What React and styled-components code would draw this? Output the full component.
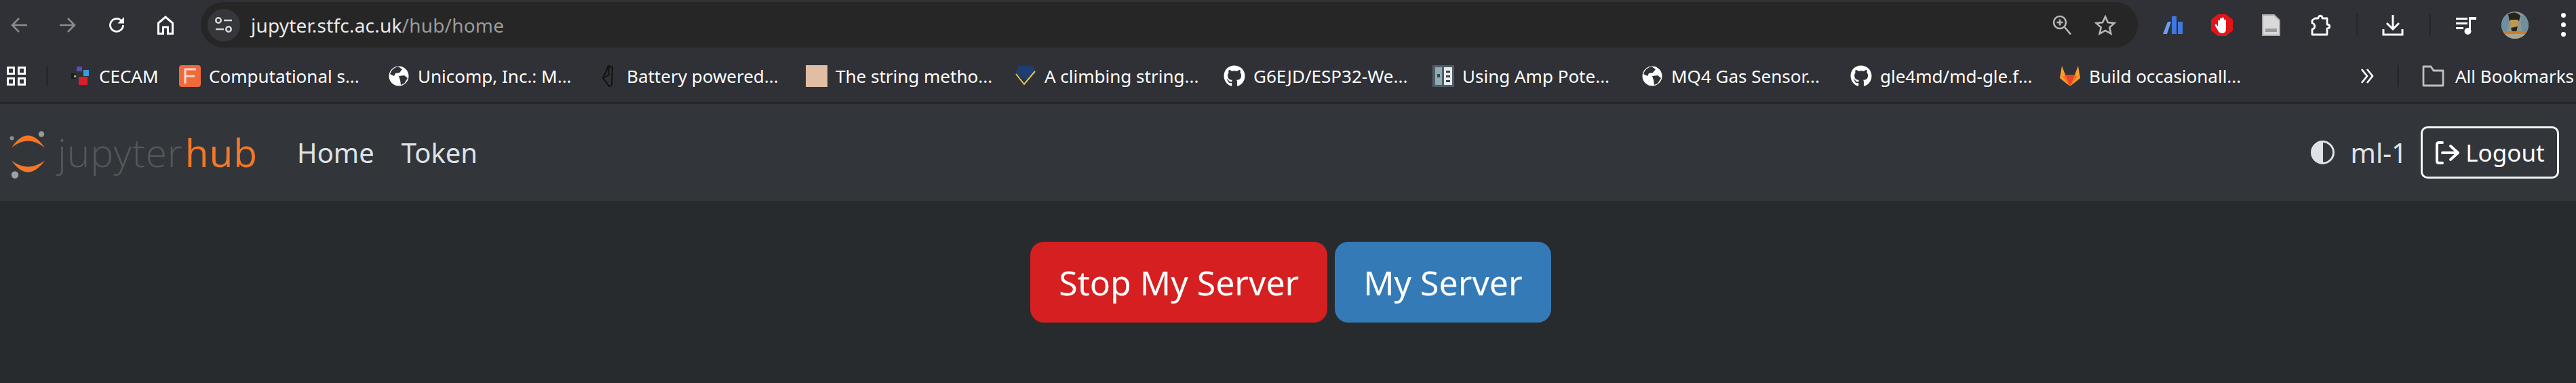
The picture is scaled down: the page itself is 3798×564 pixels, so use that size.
import styled, { createGlobalStyle } from 'styled-components';
import { FaGithub } from 'react-icons/fa';

const GlobalStyle = createGlobalStyle`
  html, body {
    margin: 0;
    height: 100%;
    background: #272b2e;
    font-family: 'Noto Sans', sans-serif;
  }
  #root {
    height: 100%;
  }
`;

export default function App() {
  const bookmarks = [
    { icon: <CecamIcon />, label: 'CECAM', width: 162 },
    { icon: <FigIcon />, label: 'Computational s...' },
    { icon: <GlobeIcon />, label: 'Unicomp, Inc.: M...' },
    { icon: <BatteryIcon />, label: 'Battery powered...' },
    { icon: <Swatch />, label: 'The string metho...' },
    { icon: <DiamondIcon />, label: 'A climbing string...' },
    { icon: <GithubIcon />, label: 'G6EJD/ESP32-We...' },
    { icon: <AmpIcon />, label: 'Using Amp Pote...' },
    { icon: <GlobeIcon />, label: 'MQ4 Gas Sensor...' },
    { icon: <GithubIcon />, label: 'gle4md/md-gle.f...' },
    { icon: <GitlabIcon />, label: 'Build occasionall...' },
  ];

  return (
    <Page>
      <GlobalStyle />
      <Chrome>
        <Toolbar>
          <NavIcon>
            <svg width="24" height="24" viewBox="0 0 24 24" fill="none" stroke="#8a8b8d" strokeWidth="2.6">
              <path d="M24 12H2M12 2 2 12l10 10" />
            </svg>
          </NavIcon>
          <NavIcon>
            <svg width="24" height="24" viewBox="0 0 24 24" fill="none" stroke="#8a8b8d" strokeWidth="2.6">
              <path d="M0 12h22M12 2l10 10-10 10" />
            </svg>
          </NavIcon>
          <NavIcon>
            <svg width="24" height="24" viewBox="0 0 24 24" fill="none" stroke="#fff" strokeWidth="2.8">
              <path d="M21.5 12a9.5 9.5 0 1 1-3-7L22 8" />
              <path d="M23 0v9.5h-9.5" fill="#fff" stroke="none" />
            </svg>
          </NavIcon>
          <NavIcon>
            <svg width="24" height="28" viewBox="0 0 24 28" fill="none" stroke="#fff" strokeWidth="3">
              <path d="M1.5 26.5V11L12 2l10.5 9v15.500h-7V17h-7v9.500z" />
            </svg>
          </NavIcon>
          <Omnibox>
            <TuneBadge>
              <svg width="26" height="24" viewBox="0 0 26 24" fill="none" stroke="#d4d5d6" strokeWidth="2.600">
                <circle cx="5" cy="5" r="3.700" />
                <path d="M13 5h12M1 18h12" />
                <circle cx="20" cy="18" r="3.700" />
              </svg>
            </TuneBadge>
            <Url>
              jupyter.stfc.ac.uk<UrlPath>/hub/home</UrlPath>
            </Url>
            <OmniActions>
              <svg width="28" height="29" viewBox="0 0 28 29" fill="none" stroke="#b5b6b7" strokeWidth="2.600">
                <circle cx="11" cy="11" r="9" />
                <path d="M18 18l9 10.500M6.500 11h9M11 6.500v9" />
              </svg>
              <svg width="32" height="30" viewBox="0 0 32 30" fill="none" stroke="#b5b6b7" strokeWidth="2.600">
                <path d="M16 2.500l3.900 8.600 9.400 1-7 6.300 2 9.200-8.300-4.700-8.300 4.700 2-9.200-7-6.300 9.400-1z" />
              </svg>
            </OmniActions>
          </Omnibox>
          <ExtensionTray>
            <svg width="30" height="28" viewBox="0 0 30 28">
              <path d="M7 9h5L6 27H0z" fill="#6f9ef0" />
              <rect x="13" y="1" width="7" height="26" fill="#3f78e0" />
              <rect x="22" y="9" width="7" height="18" fill="#3f78e0" />
            </svg>
            <svg width="32" height="32" viewBox="0 0 32 32">
              <path d="M10 0h12l10 8v16l-10 8H10L0 24V8z" fill="#e2141a" />
              <path d="M10 18V10a1.500 1.500 0 0 1 3 0v4-7a1.500 1.500 0 0 1 3 0v7V6a1.500 1.500 0 0 1 3 0v8-5a1.500 1.500 0 0 1 3 0v13c0 4-3 6-6 6s-5-2-7-6l-3-5c-1-2 1-3 2.500-1.500z" fill="#fff" />
            </svg>
            <FileSlot>
              <svg width="27" height="32" viewBox="0 0 27 32">
                <path d="M1 1h17l8 8v22H1z" fill="#d9d9d9" stroke="#a9a9a9" strokeWidth="2" />
                <rect x="5" y="21" width="17" height="5" fill="#9a9a9a" />
              </svg>
            </FileSlot>
            <PuzzleSlot>
              <svg width="31" height="32" viewBox="0 0 31 32" fill="none" stroke="#fff" strokeWidth="2.800">
                <path d="M7 6h5c0-5 6-5 6 0h7v9c5 0 5 6 0 6v9H3v-8c5-1 5-8 0-9V9z" strokeLinejoin="round" />
              </svg>
            </PuzzleSlot>
            <Divider />
            <DownloadSlot>
              <svg width="32" height="32" viewBox="0 0 32 32" fill="none" stroke="#fff" strokeWidth="3">
                <path d="M16 1v21M7 13l9 9 9-9M2 22v8h28v-8" />
              </svg>
            </DownloadSlot>
            <Divider />
            <MusicSlot>
              <svg width="30" height="28" viewBox="0 0 30 28" fill="#fff">
                <rect x="0" y="3" width="17" height="3" />
                <rect x="0" y="10" width="17" height="3" />
                <rect x="0" y="17" width="11" height="3" />
                <rect x="19" y="3" width="3" height="20" />
                <rect x="19" y="2" width="11" height="4" />
                <circle cx="17.500" cy="23" r="5" />
              </svg>
            </MusicSlot>
            <Avatar>
              <svg width="40" height="40" viewBox="0 0 40 40">
                <defs>
                  <clipPath id="avatarClip">
                    <circle cx="20" cy="20" r="20" />
                  </clipPath>
                </defs>
                <g clipPath="url(#avatarClip)">
                  <rect width="40" height="40" fill="#8c9a8c" />
                  <path d="M0 4h14L8 30H0zM28 6h12v24H30z" fill="#6f8f9f" />
                  <path d="M10 4q10-6 18 2l-2 8-14 0z" fill="#26231f" />
                  <path d="M13 12h12l-2 14-4 2-5-4z" fill="#c0974e" />
                  <path d="M14 24l10-2-2 8h-6z" fill="#26231f" />
                  <rect y="29" width="40" height="4" fill="#d07b2e" />
                  <rect y="33" width="40" height="7" fill="#a9a68c" />
                </g>
              </svg>
            </Avatar>
            <Kebab>
              <i />
              <i />
              <i />
            </Kebab>
          </ExtensionTray>
        </Toolbar>
        <BookmarkBar>
          <AppsGrid>
            <i />
            <i />
            <i />
            <i />
          </AppsGrid>
          <BarDivider />
          <BookmarkList>
            {bookmarks.map((b) => (
              <Bookmark key={b.label} $w={b.width}>
                <FavSlot>{b.icon}</FavSlot>
                {b.label}
              </Bookmark>
            ))}
          </BookmarkList>
          <BarEnd>
            <svg width="20" height="24" viewBox="0 0 20 24" fill="none" stroke="#fff" strokeWidth="2.600">
              <path d="M2 2l8 10-8 10M10 2l8 10-8 10" />
            </svg>
            <BarDivider />
            <FolderLink>
              <svg width="33" height="32" viewBox="0 0 33 32" fill="none" stroke="#bdbebf" strokeWidth="2.800">
                <path d="M2 2h11l4 6h14v22H2z" strokeLinejoin="round" />
              </svg>
              All Bookmarks
            </FolderLink>
          </BarEnd>
        </BookmarkBar>
      </Chrome>
      <HubNav>
        <Brand>
          <svg width="60" height="76" viewBox="0 0 60 76">
            <path d="M7 30.500Q31-5.500 56 30.500 31 10.500 7 30.500z" fill="#f37726" />
            <path d="M7 49.500Q31 83.500 56 49.500 31 67.500 7 49.500z" fill="#f37726" />
            <circle cx="7.500" cy="16.500" r="3" fill="#8e8e8e" />
            <circle cx="51" cy="10.500" r="4.200" fill="#9a9a9a" />
            <circle cx="12" cy="70.500" r="5.200" fill="#a0a0a0" />
          </svg>
          <BrandText>
            jupyter<BrandHub>hub</BrandHub>
          </BrandText>
        </Brand>
        <NavLinks>
          <NavLink>Home</NavLink>
          <NavLink>Token</NavLink>
        </NavLinks>
        <UserArea>
          <ThemeDot />
          <UserName>ml-1</UserName>
          <LogoutButton>
            <svg width="37" height="36" viewBox="0 0 37 36" fill="none" stroke="#fff" strokeWidth="4" strokeLinecap="round" strokeLinejoin="round">
              <path d="M11 3H6Q3 3 3 6v24q0 3 3 3h5" />
              <path d="M11 18h21M23 8l11 10-11 10" />
            </svg>
            Logout
          </LogoutButton>
        </UserArea>
      </HubNav>
      <Main>
        <ServerButton $bg="#d51f21">Stop My Server</ServerButton>
        <ServerButton $bg="#337ab7">My Server</ServerButton>
      </Main>
    </Page>
  );
}

function CecamIcon() {
  return (
    <svg width="28" height="28" viewBox="0 0 28 28">
      <rect x="9" y="0" width="8" height="7" fill="#5a4fb0" />
      <rect x="19" y="5" width="8" height="9" fill="#3a9ae0" />
      <rect x="12" y="15" width="13" height="12" fill="#d81f2a" />
      <rect x="1" y="10" width="7" height="8" fill="#1c1c1c" />
      <rect x="5" y="13" width="3" height="3" fill="#aaa" />
    </svg>
  );
}

function FigIcon() {
  return (
    <svg width="32" height="32" viewBox="0 0 32 32">
      <rect width="32" height="32" rx="4" fill="#f0693a" />
      <path d="M9 27V6h16M9 16h14" fill="none" stroke="#fbd9cb" strokeWidth="3" />
    </svg>
  );
}

function GlobeIcon() {
  return (
    <svg width="30" height="30" viewBox="0 0 30 30">
      <circle cx="15" cy="15" r="14.500" fill="#fff" />
      <path d="M14 1l6 4-4 5-6 1-2 4-6-3Q5 3 14 1zM15 15l8-1 5 4-5 8-5 2-1-7z" fill="#2f3136" />
    </svg>
  );
}

function BatteryIcon() {
  return (
    <svg width="20" height="32" viewBox="0 0 20 32" fill="none" stroke="#111" strokeWidth="2">
      <path d="M11 1l6 2-1 26-4 2-9-12z" />
      <path d="M5 18l9-5M12 3l-1 10" />
    </svg>
  );
}

function DiamondIcon() {
  return (
    <svg width="32" height="32" viewBox="0 0 32 32">
      <path d="M6 1h20l5 8-13 14L1 12z" fill="#1f3d70" />
      <path d="M2 13l12 15L30 9" fill="none" stroke="#e3c84f" strokeWidth="2" />
    </svg>
  );
}

function GithubIcon() {
  return <FaGithub size={32} color="#fff" />;
}

function AmpIcon() {
  return (
    <svg width="32" height="32" viewBox="0 0 32 32">
      <rect width="32" height="32" fill="#4f5d66" />
      <rect x="4" y="3" width="10" height="26" fill="#8fa9b5" />
      <rect x="17" y="3" width="12" height="26" fill="#e8ecee" />
      <rect x="7" y="13" width="4" height="5" fill="#39444b" />
      <rect x="20" y="8" width="6" height="3" fill="#39444b" />
      <rect x="20" y="15" width="6" height="3" fill="#39444b" />
      <rect x="20" y="22" width="6" height="3" fill="#39444b" />
    </svg>
  );
}

function GitlabIcon() {
  return (
    <svg width="32" height="32" viewBox="0 0 32 32">
      <path d="M16 31L1 19l3-18 5 13z" fill="#fc9f26" />
      <path d="M16 31l15-12-3-18-5 13z" fill="#fc9f26" />
      <path d="M16 31L5 17l4-3h14l4 3z" fill="#fc6d26" />
      <path d="M16 31L9 14h14z" fill="#e24329" />
    </svg>
  );
}

const Page = styled.div`
  height: 564px;
  display: flex;
  flex-direction: column;
  overflow: hidden;
`;
const Chrome = styled.header`
  background: #2f3136;
  border-bottom: 3px solid #25272a;
`;
const Toolbar = styled.div`
  height: 74px;
  display: flex;
  align-items: flex-start;
  padding: 3px 0 0 16px;
  box-sizing: border-box;
`;
const NavIcon = styled.span`
  flex: none;
  width: 24px;
  height: 67px;
  margin-right: 48px;
  display: flex;
  align-items: center;
  justify-content: center;
  &:nth-child(4) {
    margin-right: 40px;
  }
`;
const Omnibox = styled.div`
  flex: 1;
  height: 67px;
  background: #262626;
  border-radius: 34px;
  display: flex;
  align-items: center;
  padding: 0 32px 0 10px;
  box-sizing: border-box;
`;
const TuneBadge = styled.span`
  width: 48px;
  height: 48px;
  border-radius: 50%;
  background: #36373a;
  display: flex;
  align-items: center;
  justify-content: center;
  margin-right: 16px;
`;
const Url = styled.span`
  color: #e8e9ea;
  font-size: 28px;
  letter-spacing: 0.2px;
`;
const UrlPath = styled.span`
  color: #9a9b9d;
`;
const OmniActions = styled.span`
  margin-left: auto;
  display: flex;
  align-items: center;
  gap: 34px;
`;
const ExtensionTray = styled.div`
  width: 646px;
  height: 67px;
  flex: none;
  display: flex;
  align-items: center;
  padding-left: 37px;
  box-sizing: border-box;
  gap: 41px;
`;
const FileSlot = styled.span`
  display: flex;
  margin-left: 2px;
`;
const PuzzleSlot = styled.span`
  display: flex;
  margin-left: 3px;
`;
const Divider = styled.span`
  width: 3px;
  height: 32px;
  background: #26282b;
  margin: 0 -4px;
`;
const DownloadSlot = styled.span`
  display: flex;
  margin-left: -2px;
`;
const MusicSlot = styled.span`
  display: flex;
`;
const Avatar = styled.span`
  display: flex;
  margin-left: -4px;
`;
const Kebab = styled.span`
  display: flex;
  flex-direction: column;
  gap: 7px;
  margin-left: 7px;
  i {
    width: 7px;
    height: 7px;
    border-radius: 50%;
    background: #fff;
  }
`;
const BookmarkBar = styled.nav`
  height: 76px;
  display: flex;
  align-items: center;
  padding-left: 10px;
`;
const AppsGrid = styled.span`
  display: grid;
  grid-template-columns: 12px 12px;
  gap: 4px;
  margin-right: 30px;
  i {
    width: 6px;
    height: 6px;
    border: 3px solid #fff;
  }
`;
const BarDivider = styled.span`
  width: 3px;
  height: 32px;
  background: #26282b;
  flex: none;
`;
const BookmarkList = styled.div`
  display: flex;
  margin-left: 31px;
`;
const Bookmark = styled.a`
  flex: none;
  width: ${(p) => p.$w || 308}px;
  display: flex;
  align-items: center;
  gap: 12px;
  color: #fff;
  font-size: 26px;
  white-space: nowrap;
`;
const FavSlot = styled.span`
  width: 32px;
  height: 32px;
  display: flex;
  align-items: center;
  justify-content: center;
`;
const Swatch = styled.span`
  display: block;
  width: 32px;
  height: 32px;
  background: #e0bea3;
`;
const BarEnd = styled.div`
  margin-left: auto;
  display: flex;
  align-items: center;
  gap: 34px;
`;
const FolderLink = styled.a`
  display: flex;
  align-items: center;
  gap: 16px;
  color: #fff;
  font-size: 26px;
  padding-right: 3px;
`;
const HubNav = styled.div`
  height: 143px;
  flex: none;
  background: #32363b;
  display: flex;
  align-items: center;
  padding: 0 25px 0 10px;
  box-sizing: border-box;
`;
const Brand = styled.div`
  display: flex;
  align-items: center;
  gap: 15px;
`;
const BrandText = styled.span`
  font-family: 'Open Sans', sans-serif;
  font-size: 57px;
  font-weight: 300;
  color: #55575a;
  line-height: 1;
  letter-spacing: 0.8px;
`;
const BrandHub = styled.span`
  color: #f37726;
  font-weight: 400;
  margin-left: 3px;
`;
const NavLinks = styled.div`
  display: flex;
  gap: 40px;
  margin-left: 58px;
`;
const NavLink = styled.a`
  color: #dee2e6;
  font-size: 40px;
`;
const UserArea = styled.div`
  margin-left: auto;
  display: flex;
  align-items: center;
`;
const ThemeDot = styled.span`
  width: 29px;
  height: 29px;
  border: 3px solid #dee2e6;
  border-radius: 50%;
  background: linear-gradient(90deg, #dee2e6 50%, transparent 50%);
  margin-right: 24px;
`;
const UserName = styled.span`
  color: #dee2e6;
  font-size: 40px;
  margin-right: 20px;
`;
const LogoutButton = styled.button`
  width: 204px;
  height: 77px;
  border: 3px solid #f2f3f4;
  border-radius: 10px;
  background: transparent;
  color: #fff;
  font-family: 'Noto Sans', sans-serif;
  font-size: 35px;
  display: flex;
  align-items: center;
  justify-content: center;
  gap: 8px;
  padding: 0;
  box-sizing: border-box;
`;
const Main = styled.main`
  flex: 1;
  display: flex;
  justify-content: center;
  align-items: flex-start;
  gap: 11px;
  padding: 60px 0 0 8px;
  background: #272b2e;
`;
const ServerButton = styled.button`
  height: 119px;
  padding: 0 42px;
  border: 0;
  border-radius: 20px;
  background: ${(p) => p.$bg};
  color: #fff;
  font-family: 'Noto Sans', sans-serif;
  font-size: 50px;
`;
